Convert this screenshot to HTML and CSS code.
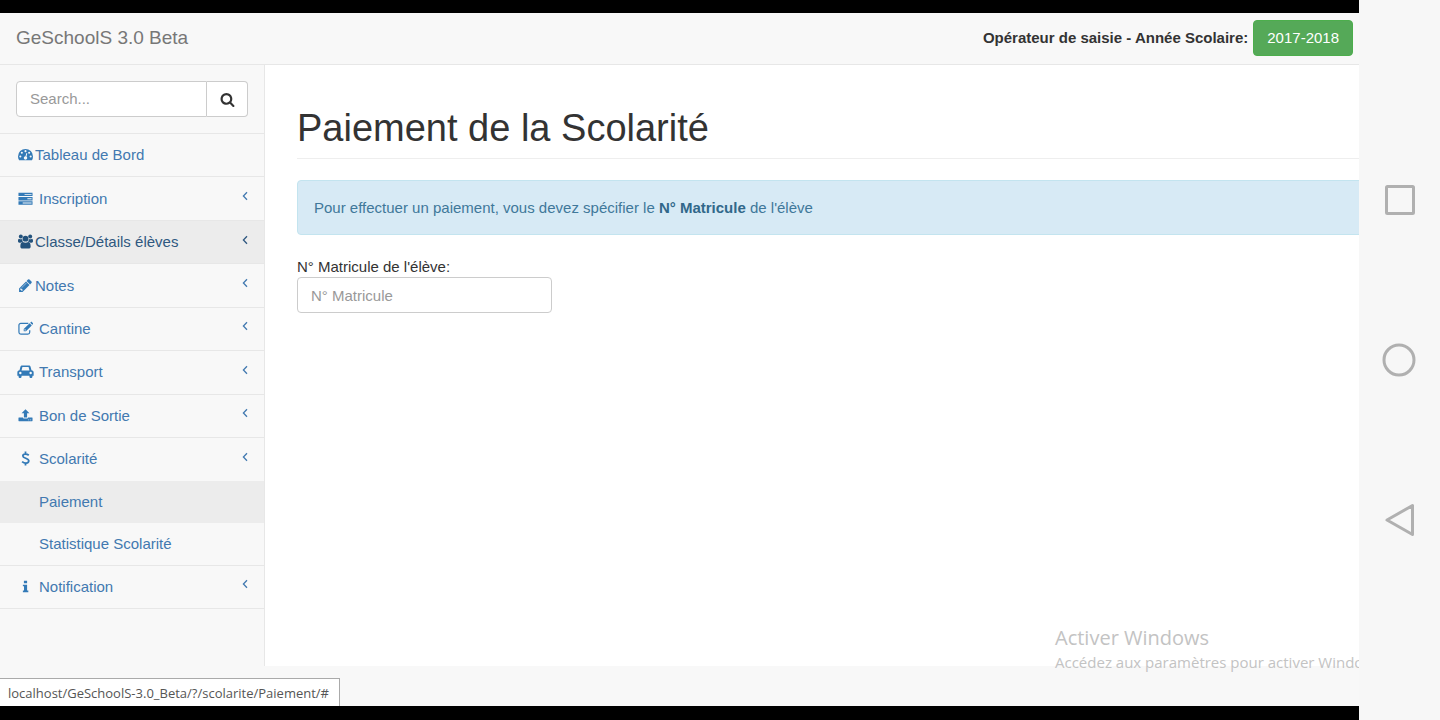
FILE: index.html
```html
<!DOCTYPE html>
<html lang="fr">
<head>
<meta charset="utf-8">
<title>GeSchoolS 3.0 Beta</title>
<link rel="stylesheet" href="styles.css">
</head>
<body>
<svg class="defs" aria-hidden="true">
  <symbol id="chev" viewBox="0 0 6 10"><path d="M5 1.200 1.400 5 5 8.800" fill="none" stroke="currentColor" stroke-width="1.300"/></symbol>
</svg>
<div class="device">
  <div class="screen">
    <header class="topbar">
      <a class="brand" href="#">GeSchoolS 3.0 Beta</a>
      <div class="session"><strong>Opérateur de saisie - Année Scolaire:</strong><button class="year" type="button">2017-2018</button></div>
    </header>
    <div class="body">
      <nav class="sidebar">
        <form class="search">
          <input type="text" placeholder="Search..." aria-label="Search">
          <button type="button" aria-label="Lancer la recherche"><svg class="glass" viewBox="0 0 1792 1792"><path fill="currentColor" d="M1216 832q0-185-131.500-316.500t-316.500-131.500-316.500 131.500-131.500 316.500 131.500 316.500 316.500 131.500 316.500-131.500 131.500-316.500zm512 832q0 52-38 90t-90 38q-54 0-90-38l-343-342q-179 124-399 124-143 0-273.500-55.500t-225-150-150-225-55.500-273.500 55.500-273.500 150-225 225-150 273.500-55.500 273.500 55.500 225 150 150 225 55.500 273.500q0 220-124 399l343 343q37 37 37 90z"/></svg></button>
        </form>
        <ul class="menu">
          <li><a href="#"><svg class="icon" viewBox="0 0 16 16"><path fill="currentColor" fill-rule="evenodd" d="M8 2A8 8 0 0 0 0 10c0 1.500.4 2.900 1.200 4.200h13.600A8 8 0 0 0 16 10 8 8 0 0 0 8 2zM2.500 9a1.100 1.100 0 1 1 0 2.200 1.100 1.100 0 0 1 0-2.200zm1.600-4a1.100 1.100 0 1 1 0 2.200 1.100 1.100 0 0 1 0-2.200zM8 3.300a1.100 1.100 0 1 1 0 2.200 1.100 1.100 0 0 1 0-2.200zM11.900 5a1.100 1.100 0 1 1 0 2.200 1.100 1.100 0 0 1 0-2.200zM13.500 9a1.100 1.100 0 1 1 0 2.200 1.100 1.100 0 0 1 0-2.200zM8.900 6.500l1 .3-.9 3.400a1.800 1.800 0 1 1-1-.3z"/></svg><span>Tableau de Bord</span></a></li>
          <li><a href="#"><svg class="icon" viewBox="0 0 16 16"><path fill="currentColor" fill-rule="evenodd" d="M.5 1.800h15v3.600H.5zM7 3.100v1h7.500v-1zM.5 6.400h15V10H.5zm9.500 1.300v1h4.500v-1zM.5 11h15v3.600H.5zM5 12.300v1h9.500v-1z"/></svg><span class="gap">Inscription</span><svg class="chev"><use href="#chev"/></svg></a></li>
          <li><a class="hover" href="#"><svg class="icon" viewBox="0 0 16 16"><g fill="currentColor"><circle cx="3" cy="2.700" r="2.100"/><circle cx="13" cy="2.700" r="2.100"/><circle cx="8" cy="5" r="3.100"/><path d="M1.200 5c1 .8 2.200.8 3.200.4 0 1.200.4 2.100 1.100 2.800-1.300 0-2 .3-2.700 1H1.500C.5 9.200 0 8.600 0 7.700 0 6.300.3 5 1.200 5zM14.800 5c-1 .8-2.200.8-3.200.4 0 1.200-.4 2.100-1.100 2.800 1.300 0 2 .3 2.700 1h1.300c1 0 1.500-.6 1.500-1.500 0-1.400-.3-2.700-1.200-2.700z"/><path d="M5.100 8.500c1.800 1.100 4 1.100 5.800 0 1.900 0 2.600 2.200 2.600 4.700 0 1.500-.9 2.300-2.200 2.300H4.700c-1.300 0-2.200-.8-2.200-2.300 0-2.500.7-4.700 2.600-4.700z"/></g></svg><span>Classe/Détails élèves</span><svg class="chev"><use href="#chev"/></svg></a></li>
          <li><a href="#"><svg class="icon" viewBox="0 0 1792 1792"><path fill="currentColor" d="M491 1536l91-91-235-235-91 91v107h128v128h107zm523-928q0-22-22-22-10 0-17 7l-542 542q-7 7-7 17 0 22 22 22 10 0 17-7l542-542q7-7 7-17zm-54-192l416 416-832 832h-416v-416zm683 96q0 53-37 90l-166 166-416-416 166-165q36-38 90-38 53 0 91 38l235 234q37 39 37 91z"/></svg><span>Notes</span><svg class="chev"><use href="#chev"/></svg></a></li>
          <li><a href="#"><svg class="icon" viewBox="0 0 16 16"><path fill="none" stroke="currentColor" stroke-width="1.300" d="M11 2.500H3A2 2 0 0 0 1 4.500v7.500a2 2 0 0 0 2 2h7.500a2 2 0 0 0 2-2V9.800"/><path fill="currentColor" fill-rule="evenodd" d="M12.400 2.400l2.300 2.300L8.500 11H6.100V8.500zM7 9v1h1l.4-.4-1-1zM13 1.800l.6-.6c.4-.4 1-.4 1.400 0l.8.8c.4.400.4 1 0 1.400l-.6.600z"/></svg><span class="gap">Cantine</span><svg class="chev"><use href="#chev"/></svg></a></li>
          <li><a href="#"><svg class="icon wide" viewBox="0 0 18 16"><path fill="currentColor" fill-rule="evenodd" d="M5.500 1.500h7c1 0 1.700.5 1.900 1.400l1 3.800c1.400.1 2.300 1 2.300 2.300v3.500h-1.300v.8c0 1-.7 1.700-1.600 1.700s-1.600-.7-1.600-1.700v-.8H4.800v.8c0 1-.7 1.700-1.600 1.700s-1.600-.7-1.600-1.700v-.8H.3V9c0-1.300.9-2.200 2.300-2.300l1-3.800c.2-.9.900-1.400 1.900-1.400zm.2 1.800l-.9 3.500h8.400l-.9-3.500zM3.500 8.300a1.300 1.300 0 1 0 0 2.600 1.300 1.300 0 0 0 0-2.600zm11 0a1.300 1.300 0 1 0 0 2.600 1.300 1.300 0 0 0 0-2.600z"/></svg><span class="gap">Transport</span><svg class="chev"><use href="#chev"/></svg></a></li>
          <li><a href="#"><svg class="icon" viewBox="0 0 16 16"><path fill="currentColor" fill-rule="evenodd" d="M8 1.200l4.200 4.300H9.700v4.700H6.300V5.500H3.800zM1 10h4.300c.2.900.9 1.300 1.700 1.300h2c.8 0 1.500-.4 1.700-1.300H15c.3 0 .5.200.5.500v3.200c0 .3-.2.500-.5.500H1c-.3 0-.5-.2-.5-.5v-3.200c0-.3.200-.5.500-.5zm10 2.300v.8h.9v-.8zm2.100 0v.8h.9v-.8z"/></svg><span class="gap">Bon de Sortie</span><svg class="chev"><use href="#chev"/></svg></a></li>
          <li><a href="#"><svg class="icon" viewBox="0 0 16 16"><path fill="none" stroke="currentColor" stroke-width="1.900" d="M8 .5v2.600M8 12.900v2.600M11.500 4.500C9.700 3 5.200 2.600 5.200 5.300 5.200 8 11.500 7.500 11.500 10.500c0 3.200-4.900 2.900-7.100.8"/></svg><span class="gap">Scolarité</span><svg class="chev"><use href="#chev"/></svg></a>
            <ul class="submenu">
              <li><a class="current" href="#">Paiement</a></li>
              <li><a href="#">Statistique Scolarité</a></li>
            </ul></li>
          <li><a href="#"><svg class="icon" viewBox="0 0 16 16"><path fill="currentColor" d="M6.300 1.800h3.400v2.800H6.300zM5.200 6h4.500v6.200H11V14H5.200v-1.800h1.200V7.800H5.200z"/></svg><span class="gap">Notification</span><svg class="chev"><use href="#chev"/></svg></a></li>
        </ul>
      </nav>
      <main class="content">
        <h1>Paiement de la Scolarité</h1>
        <p class="alert">Pour effectuer un paiement, vous devez spécifier le <strong>N° Matricule</strong> de l'élève</p>
        <label for="matricule">N° Matricule de l'élève:</label>
        <input class="field" id="matricule" type="text" placeholder="N° Matricule">
      </main>
    </div>
    <aside class="watermark"><p class="wm-title">Activer Windows</p><p class="wm-text">Accédez aux paramètres pour activer Windo</p></aside>
    <div class="status">localhost/GeSchoolS-3.0_Beta/?/scolarite/Paiement/#</div>
  </div>
  <div class="keys">
    <button type="button" aria-label="Applications récentes"><svg viewBox="0 0 36 36"><rect x="4.500" y="4.500" width="27" height="27" rx="1"/></svg></button>
    <button type="button" aria-label="Accueil"><svg viewBox="0 0 36 36"><circle cx="17" cy="18" r="15"/></svg></button>
    <button type="button" aria-label="Retour"><svg viewBox="0 0 36 36"><path d="M30.500 3.500v29L5 18z"/></svg></button>
  </div>
</div>
</body>
</html>
```
FILE: styles.css
```css
* { box-sizing: border-box; }
body {
  margin: 0;
  background: #000;
  color: #333;
  font: 15px/21px "Liberation Sans", Arial, sans-serif;
}
a { color: #4279b0; text-decoration: none; }
button, input { font: inherit; }
ul { list-style: none; margin: 0; padding: 0; }
.defs { position: absolute; width: 0; height: 0; }

.device { display: flex; min-height: 100vh; }
.screen {
  position: relative;
  flex: 1;
  min-width: 0;
  display: flex;
  flex-direction: column;
  overflow: hidden;
  background: #f8f8f8;
  border-top: 13px solid #000;
  border-bottom: 14px solid #000;
}

.topbar {
  display: flex;
  justify-content: space-between;
  align-items: center;
  height: 52px;
  padding: 0 6px 2px 16px;
  border-bottom: 1px solid #e7e7e7;
}
.brand { color: #777; font-size: 19px; }
.session { display: flex; align-items: center; gap: 5px; white-space: nowrap; }
.session strong { padding-bottom: 1px; }
.year {
  height: 36px;
  padding: 0 13px;
  border: 1px solid #4cae4c;
  border-radius: 4px;
  background: #55a958;
  color: #fff;
}

.body { flex: 1; display: flex; margin-bottom: 40px; }
.sidebar {
  flex: none;
  width: 265px;
  display: flex;
  flex-direction: column;
  padding-bottom: 57px;
  border-right: 1px solid #e7e7e7;
}
.search {
  display: flex;
  padding: 16px;
  border-bottom: 1px solid #e7e7e7;
}
.search input {
  flex: 1;
  min-width: 0;
  height: 36px;
  padding: 0 13px 1px;
  border: 1px solid #ccc;
  border-radius: 4px 0 0 4px;
  background: #fff;
}
.search button {
  width: 41px;
  padding: 0;
  border: 1px solid #ccc;
  border-left: 0;
  border-radius: 0 4px 4px 0;
  background: #fff;
  color: #333;
}
::placeholder { color: #999; opacity: 1; }
.glass { display: block; width: 15px; height: 15px; margin: 0 auto; }

.menu { flex: 1; display: flex; flex-direction: column; }
.menu > li {
  flex: 1 0 auto;
  display: flex;
  flex-direction: column;
  border-bottom: 1px solid #e7e7e7;
}
.menu > li > a {
  flex: 1;
  display: flex;
  align-items: center;
  min-height: 42px;
  padding: 0 16px 1px;
}
.menu a.hover { background: #ececec; color: #2f5880; }
.icon { flex: none; width: 15px; height: 15px; margin: 0 2px; color: #337ab7; }
.hover .icon { color: #23527c; }
.icon.wide { width: 17px; margin: 0 1px; }
.gap { padding-left: 4px; }
.chev { width: 6px; height: 10px; margin: 0 0 4px auto; }
.submenu a { display: block; padding: 10px 16px 11px 39px; }
.submenu a.current { background: #ececec; }

.content {
  flex: 1;
  min-width: 0;
  padding: 42px 0 0 32px;
  background: #fff;
}
h1 {
  margin: 0 0 21px;
  padding-bottom: 9px;
  border-bottom: 1px solid #eee;
  font-size: 38px;
  font-weight: 400;
  line-height: 42px;
}
.alert {
  margin: 0 -32px 21px 0;
  padding: 16px;
  border: 1px solid #c3e4ef;
  border-radius: 4px;
  background: #d7eaf5;
  color: #40789a;
}
.alert strong { color: #31688a; }
label { display: block; }
.field {
  display: block;
  width: 255px;
  height: 36px;
  padding: 0 13px;
  border: 1px solid #ccc;
  border-radius: 4px;
  background: #fff;
}

.watermark {
  position: absolute;
  right: 0;
  bottom: 34px;
  width: 304px;
  white-space: nowrap;
  color: #c3c3c3;
  font-family: "Open Sans", "Segoe UI", sans-serif;
}
.watermark p { margin: 0; }
.wm-title { font-size: 20px; line-height: 28px; }
.wm-text { font-size: 15px; line-height: 20px; }

.status {
  position: absolute;
  left: 0;
  bottom: 0;
  height: 28px;
  padding: 0 10px 0 8px;
  border-top: 1px solid #aaa;
  border-right: 1px solid #aaa;
  background: #fff;
  color: #555;
  font: 13px/28px "Open Sans", "Segoe UI", sans-serif;
}

.keys {
  flex: none;
  width: 81px;
  display: flex;
  flex-direction: column;
  justify-content: center;
  align-items: center;
  gap: 124px;
  background: #f7f7f7;
}
.keys button { padding: 0; border: 0; background: none; }
.keys svg {
  display: block;
  width: 36px;
  height: 36px;
  fill: none;
  stroke: #b0b0b0;
  stroke-width: 3;
  stroke-linejoin: round;
}
```
